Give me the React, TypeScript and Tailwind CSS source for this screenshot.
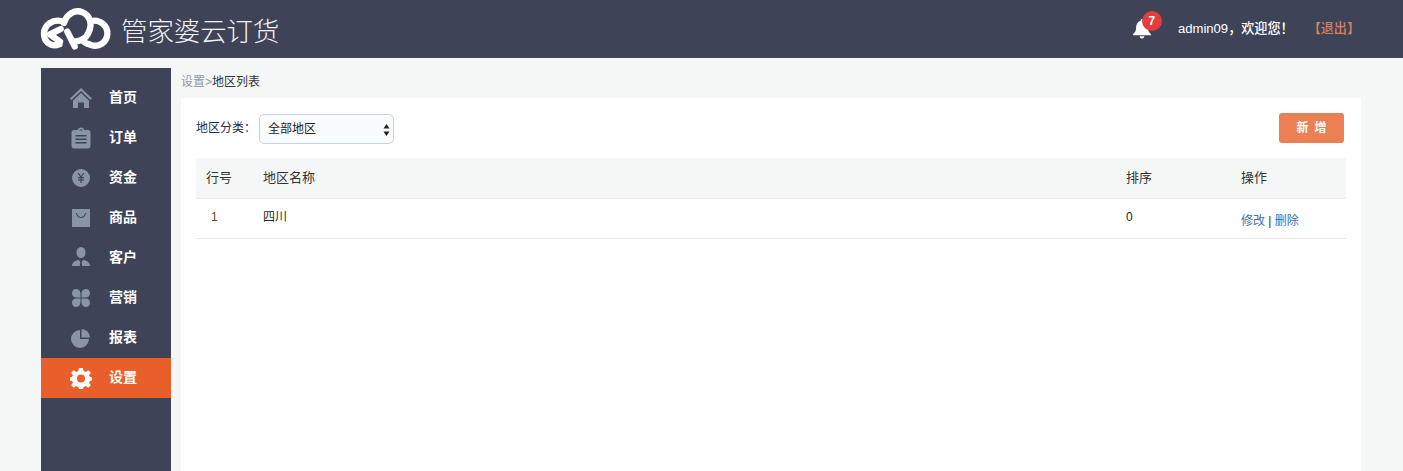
import React from 'react';

const FONT = '"Liberation Sans", "Noto Sans CJK SC", sans-serif';

const iconClass = 'w-[22px] h-[22px] fill-current';

const HomeIcon = () => (
  <svg viewBox="0 0 22 22" className={iconClass}>
    <path d="M11 1 L22 11.5 L20.6 13 L11 4 L1.4 13 L0 11.5 Z" />
    <path d="M11 6 L19 13.4 V21 H14 V15.5 H8 V21 H3 V13.4 Z" />
  </svg>
);

const OrderIcon = () => (
  <svg viewBox="0 0 22 22" className={iconClass}>
    <path
      fillRule="evenodd"
      d="M4 3 H7.500 C8 1.500 9.300 0.500 11 0.500 C12.700 0.500 14 1.500 14.500 3 H18 C19.500 3 20.500 4 20.500 5.500 V19 C20.500 20.500 19.500 21.500 18 21.500 H4 C2.500 21.500 1.500 20.500 1.500 19 V5.500 C1.500 4 2.500 3 4 3 Z M9.500 3.500 H12.500 V2.500 H9.500 Z M5.500 8 V9.500 H16.500 V8 Z M5.500 11.500 V13 H16.500 V11.500 Z M5.500 15 V16.500 H16.500 V15 Z"
    />
  </svg>
);

const MoneyIcon = () => (
  <svg viewBox="0 0 22 22" className={iconClass}>
    <path
      fillRule="evenodd"
      d="M11 2 A9 9 0 1 1 11 20 A9 9 0 0 1 11 2 Z M7.500 6 L10.300 10 H8 V11.200 H10.400 V12.300 H8 V13.500 H10.400 V16 H11.600 V13.500 H14 V12.300 H11.600 V11.200 H14 V10 H11.700 L14.500 6 H13.100 L11 9.200 L8.900 6 Z"
    />
  </svg>
);

const BagIcon = () => (
  <svg viewBox="0 0 22 22" className={iconClass}>
    <path
      fillRule="evenodd"
      d="M3 2 H19 C19.600 2 20 2.400 20 3 V19 C20 19.600 19.600 20 19 20 H3 C2.400 20 2 19.600 2 19 V3 C2 2.400 2.400 2 3 2 Z M6 6 C6.500 9.500 8.500 11 11 11 C13.500 11 15.500 9.500 16 6 L15 6 C14.500 8.500 13 10 11 10 C9 10 7.500 8.500 7 6 Z"
    />
  </svg>
);

const UserIcon = () => (
  <svg viewBox="0 0 22 22" className={iconClass}>
    <ellipse cx="11" cy="5.500" rx="4.500" ry="5.500" />
    <path d="M2 19 C2 15.500 5 14 8.500 12.800 L10.300 15 L9.800 19 Z M20 19 C20 15.500 17 14 13.500 12.800 L11.700 15 L12.200 19 Z" />
  </svg>
);

const MarketingIcon = () => (
  <svg viewBox="0 0 22 22" className={iconClass}>
    <path d="M6 2 C8.500 2 10.500 4 10.500 6.500 C10.500 9 10.500 10.500 10.500 10.500 H6 C3.500 10.500 2 8.500 2 6.300 C2 4 3.500 2 6 2 Z" />
    <path d="M16 2 C13.500 2 11.500 4 11.500 6.500 C11.500 9 11.500 10.500 11.500 10.500 H16 C18.500 10.500 20 8.500 20 6.300 C20 4 18.500 2 16 2 Z" />
    <path d="M6 20 C8.500 20 10.500 18 10.500 15.500 C10.500 13 10.500 11.500 10.500 11.500 H6 C3.500 11.500 2 13.500 2 15.700 C2 18 3.500 20 6 20 Z" />
    <path d="M16 20 C13.500 20 11.500 18 11.500 15.500 C11.500 13 11.500 11.500 11.500 11.500 H16 C18.500 11.500 20 13.500 20 15.700 C20 18 18.500 20 16 20 Z" />
  </svg>
);

const PieIcon = () => (
  <svg viewBox="0 0 22 22" className={iconClass}>
    <path d="M10 3 V12 H19 A9 9 0 1 1 10 3 Z" />
    <path d="M11.500 2 A8.800 8.800 0 0 1 20 10.500 H11.500 Z" />
  </svg>
);

const GearIcon = () => (
  <svg viewBox="0 0 22 22" className={iconClass}>
    <path
      fillRule="evenodd"
      d="M9 1 H13 L13.600 4 L15.700 4.900 L18.300 3.200 L20.800 5.700 L19.100 8.300 L20 10 L22 10.500 V13.500 L20 14 L19.100 15.700 L20.800 18.300 L18.300 20.800 L15.700 19.100 L13.600 20 L13 22 H9 L8.400 20 L6.300 19.100 L3.700 20.800 L1.200 18.300 L2.900 15.700 L2 14 L0 13.500 V10.500 L2 10 L2.900 8.300 L1.200 5.700 L3.700 3.200 L6.300 4.900 L8.400 4 Z M11 7.500 A4 4 0 1 0 11 15.500 A4 4 0 0 0 11 7.500 Z"
    />
  </svg>
);

const menu = [
  { label: '首页', icon: <HomeIcon /> },
  { label: '订单', icon: <OrderIcon /> },
  { label: '资金', icon: <MoneyIcon /> },
  { label: '商品', icon: <BagIcon /> },
  { label: '客户', icon: <UserIcon /> },
  { label: '营销', icon: <MarketingIcon /> },
  { label: '报表', icon: <PieIcon /> },
  { label: '设置', icon: <GearIcon />, active: true },
];

const Logo = () => (
  <svg viewBox="0 0 252 168" className="w-[84px] h-[56px] shrink-0" fill="none" stroke="white" strokeWidth="19" strokeLinecap="round">
    <path d="M76 60 C50 54 24 72 24 98 C24 122 44 140 70 130" />
    <path d="M42 100 L74 84 M44 102 L72 122" />
    <path d="M84 66 C92 38 118 24 140 34 C162 44 170 68 158 94 C150 114 128 124 112 120" />
    <path d="M94 92 L116 136" />
    <path d="M165 60 C190 54 216 72 214 100 C212 124 190 140 165 132 C156 129 148 127 144 122" />
  </svg>
);

const App: React.FC = () => {
  return (
    <div className="h-[471px] overflow-hidden bg-[#f5f7f6]" style={{ fontFamily: FONT }}>
      <header className="h-[58px] bg-[#3e4358] flex items-center justify-between pl-[36px] pr-[43px]">
        <div className="flex items-center">
          <Logo />
          <span className="ml-[1px] mt-[7px] text-[26.4px] leading-none font-light text-[#f2f3f5]">管家婆云订货</span>
        </div>
        <div className="flex items-center text-[13.1px] font-medium text-white">
          <div className="relative w-[20px] h-[20px] mr-[26px]">
            <svg viewBox="0 0 20 22" className="w-[20px] h-[20px] fill-white">
              <path d="M10 0 C11 0 11.500 .800 11.500 1.800 C15 2.800 16.500 6 16.500 9.500 C16.500 13 18 15 20 16.800 V18 H0 V16.800 C2 15 3.500 13 3.500 9.500 C3.500 6 5 2.800 8.500 1.800 C8.500 .800 9 0 10 0 Z M7.500 19 H12.500 C12.500 20.500 11.500 21.500 10 21.500 C8.500 21.500 7.500 20.500 7.500 19 Z" />
            </svg>
            <span className="absolute left-[10px] top-[-8px] w-[20px] h-[20px] rounded-full bg-[#e33e3c] text-[12px] font-bold leading-[20px] text-center">7</span>
          </div>
          <span>admin09，欢迎您！</span>
          <span className="ml-[14px] text-[#d8815f]">【退出】</span>
        </div>
      </header>

      <div className="flex pl-[41px] pt-[10px]">
        <aside className="w-[130px] h-[403px] shrink-0 bg-[#3e4358] pt-[10px]">
          {menu.map((item) => (
            <div
              key={item.label}
              className={`h-[40px] flex items-center pl-[29px] ${item.active ? 'bg-[#e95f2b] text-white' : 'text-[#8a94a8]'}`}
            >
              {item.icon}
              <span className="ml-[17px] -mt-px text-[14px] font-bold text-white">{item.label}</span>
            </div>
          ))}
        </aside>

        <main className="w-[1180px] ml-[10px]">
          <div className="h-[30px] text-[12px] leading-[28px] text-[#333]">
            <span className="text-[#8d99a6]">设置&gt;</span>地区列表
          </div>
          <div className="bg-white h-[373px] px-[15px] pt-[15px]">
            <div className="flex items-center justify-between h-[30px]">
              <div className="flex items-center">
                <label className="text-[12px] text-[#1f2d4d] w-[63px]">地区分类：</label>
                <div className="relative w-[135px] h-[30px] mt-[2px]">
                  <select className="appearance-none w-full h-full pl-[8px] rounded-[5px] border border-[#c9d3e6] bg-[#fafbfc] text-[12px] text-[#222]">
                    <option>全部地区</option>
                  </select>
                  <svg viewBox="0 0 7 14" className="absolute right-[4px] top-[9px] w-[7px] h-[14px] fill-[#222] pointer-events-none">
                    <path d="M3.500 1 L6.500 5.500 H0.500 Z M3.500 13 L0.500 8.500 H6.500 Z" />
                  </svg>
                </div>
              </div>
              <button className="w-[65px] h-[30px] mr-[2px] rounded-[3px] bg-[#ec8055] text-white text-[12px] font-bold tracking-[6px] pl-[6px]">新增</button>
            </div>

            <table className="w-[1150px] mt-[15px] text-[12px] table-fixed">
              <thead>
                <tr className="h-[40px] bg-[#f5f7f6] border-b border-[#e8ebea] text-left text-[13px] text-[#333]">
                  <th className="w-[57px] pl-[10px] font-normal">行号</th>
                  <th className="font-normal pl-[10px]">地区名称</th>
                  <th className="w-[115px] font-normal pl-[10px]">排序</th>
                  <th className="w-[115px] font-normal pl-[10px]">操作</th>
                </tr>
              </thead>
              <tbody>
                <tr className="h-[40px] border-b border-[#e8ebea] text-[#222]">
                  <td className="pl-[15px] pb-[2px] text-[#5c4a1e]">1</td>
                  <td className="pl-[10px] pb-[2px]">四川</td>
                  <td className="pl-[10px] pb-[2px]">0</td>
                  <td className="pl-[10px] pt-[5px] text-[#3a6fb0]">
                    修改 <span className="text-[#333]">|</span> 删除
                  </td>
                </tr>
              </tbody>
            </table>
          </div>
        </main>
      </div>
    </div>
  );
};

export default App;
